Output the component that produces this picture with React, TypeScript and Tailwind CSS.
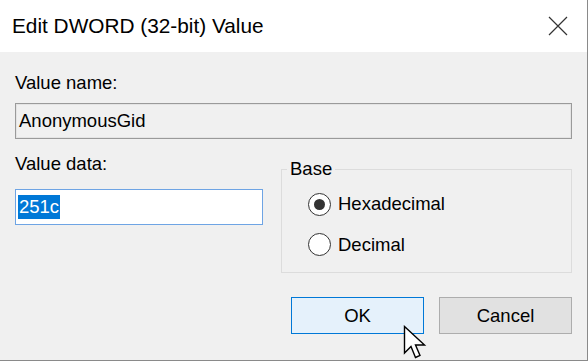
import React from "react";

function CloseIcon() {
  return (
    <svg width="20" height="20" viewBox="0 0 20 20" fill="none">
      <path d="M1 1 L19 19 M19 1 L1 19" stroke="#333" strokeWidth="1.2" />
    </svg>
  );
}

function Radio({ checked, label }: { checked: boolean; label: string }) {
  return (
    <div className="flex items-center h-[24px]">
      <div className="w-[23px] h-[23px] rounded-full border-[1.5px] border-[#333] bg-white flex items-center justify-center">
        {checked && <div className="w-[11px] h-[11px] rounded-full bg-[#333]" />}
      </div>
      <span className="ml-[7px] text-[18.5px] leading-[22px] text-black">{label}</span>
    </div>
  );
}

function Cursor() {
  return (
    <svg
      className="absolute left-[403px] top-[325px]"
      width="26"
      height="36"
      viewBox="0 0 26 36"
    >
      <path
        d="M1.5 1.5 L1.5 28 L8 21.5 L12.5 32.5 L17 30.5 L12.5 20 L21.5 20 Z"
        fill="white"
        stroke="black"
        strokeWidth="1.4"
        strokeLinejoin="miter"
      />
    </svg>
  );
}

export default function App() {
  return (
    <div
      className="relative w-[588px] h-[361px] bg-[#f0f0f0] border-r border-b border-[#8a8a8a] flex flex-col overflow-hidden"
      style={{ fontFamily: '"Liberation Sans", Arial, sans-serif' }}
    >
      <div className="h-[52px] bg-white flex items-center justify-between pl-[12px] pr-[19px] shrink-0">
        <span className="text-[20.8px] leading-[26px] text-black">Edit DWORD (32-bit) Value</span>
        <CloseIcon />
      </div>

      <div className="flex flex-col pl-[15px] pr-[15px]">
        <div className="mt-[20px] text-[18.5px] leading-[22px] text-black">Value name:</div>
        <div className="mt-[9px] h-[36px] border border-[#9a9a9a] shadow-[inset_0_0_0_1px_#e4e4e4] bg-[#f0f0f0] flex items-center pl-[3px] text-[18.5px] leading-[22px] text-black">
          AnonymousGid
        </div>

        <div className="flex items-start">
          <div className="flex flex-col w-[248px]">
            <div className="mt-[14px] text-[18.5px] leading-[22px] text-black">Value data:</div>
            <div className="mt-[14px] h-[36px] border border-[#6ea4e4] bg-white flex items-center pl-[2px]">
              <span className="bg-[#0078d7] text-white text-[18.5px] leading-[24px] px-[1px]">251c</span>
            </div>
          </div>

          <fieldset className="ml-[18px] mt-[19px] w-[291px] h-[115px] border border-[#dcdcdc] pl-[26px]">
            <legend className="ml-[-21px] px-[3px] text-[18.5px] leading-[22px] text-black">Base</legend>
            <div className="flex flex-col gap-[16.5px] mt-[12px]">
              <Radio checked label="Hexadecimal" />
              <Radio checked={false} label="Decimal" />
            </div>
          </fieldset>
        </div>

        <div className="flex justify-end gap-[15px] mt-[24px]">
          <div className="w-[133px] h-[37px] border border-[#0078d7] bg-[#e5f1fb] flex items-center justify-center text-[18.5px] text-black">
            OK
          </div>
          <div className="w-[133px] h-[37px] border border-[#adadad] bg-[#e1e1e1] flex items-center justify-center text-[18.5px] text-black">
            Cancel
          </div>
        </div>
      </div>

      <Cursor />
    </div>
  );
}
